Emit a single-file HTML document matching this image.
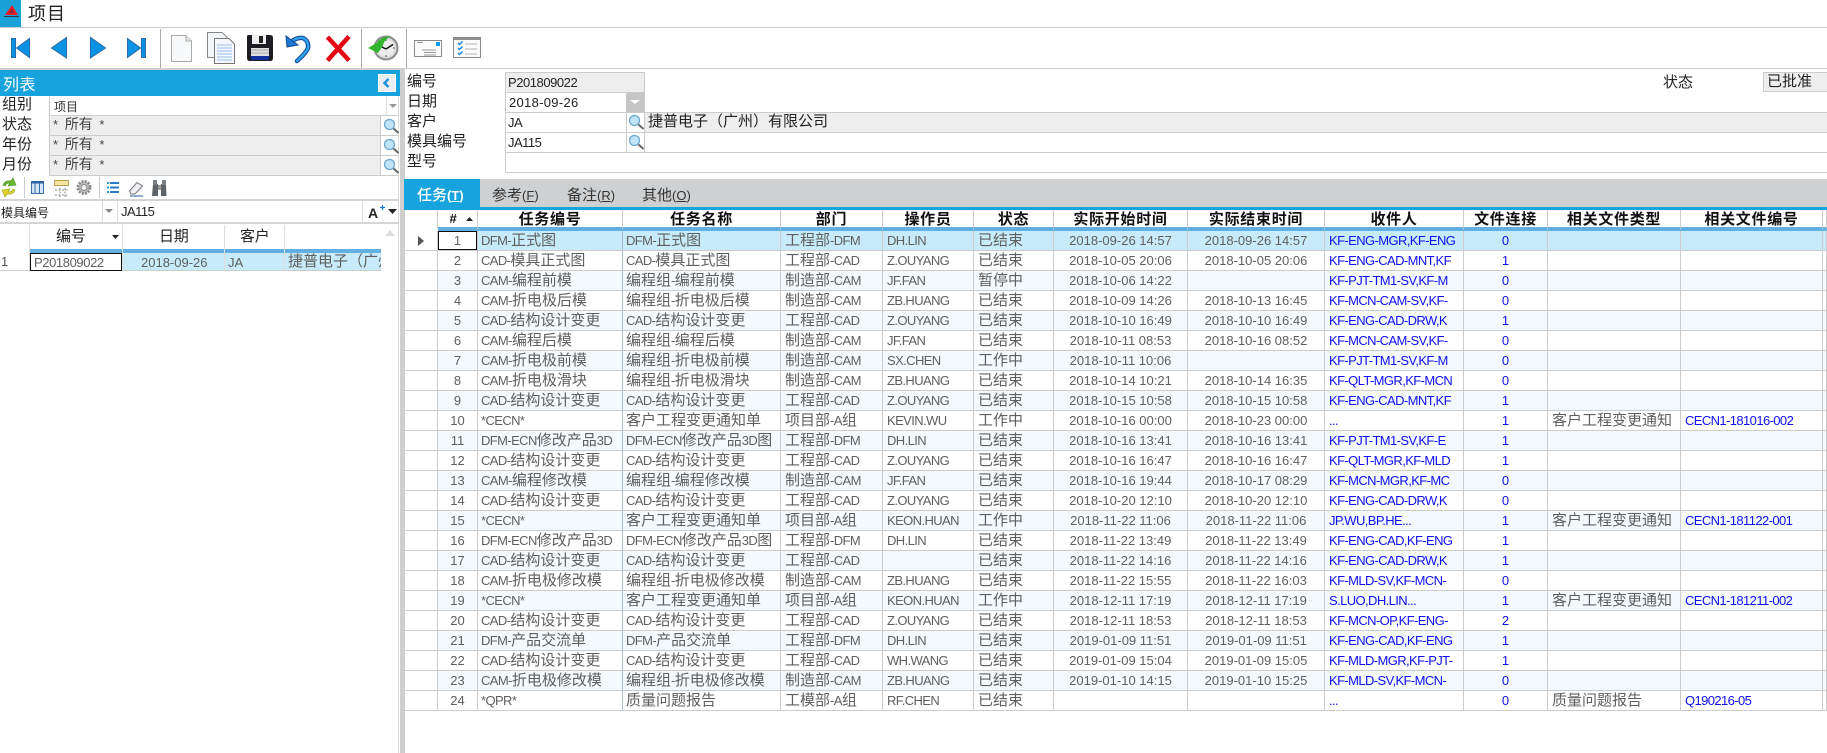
<!DOCTYPE html>
<html lang="zh"><head><meta charset="utf-8"><title>项目</title>
<style>
html,body{margin:0;padding:0;background:#fff}
body{width:1827px;height:753px;position:relative;overflow:hidden;font-family:"Liberation Sans","Noto Sans CJK SC",sans-serif;font-size:13px;color:#222}
.a{position:absolute;white-space:nowrap}
svg{position:absolute;overflow:visible}
i{font-style:normal;font-size:15px;font-family:"Noto Sans CJK SC",sans-serif;line-height:1;letter-spacing:0}
.l{background:#ccc;position:absolute}
.lb{position:absolute;font:15px/20px "Noto Sans CJK SC",sans-serif;color:#222;white-space:nowrap}
#g{position:absolute;left:405px;top:210px;width:1422px;table-layout:fixed;border-collapse:separate;border-spacing:0}
#g td,#g th{box-sizing:border-box;height:20px;padding:0 0 0 4px;border-right:1px solid #ccc;border-bottom:1px solid #ccc;overflow:hidden;white-space:nowrap;line-height:19px;color:#5f5f5f;font-weight:400;text-align:left;font-size:13px;letter-spacing:-.6px}
#g th{height:21px;border-bottom:4px solid #64afe2;font:700 15px/17px "Noto Sans CJK SC",sans-serif;letter-spacing:.7px;color:#111;text-align:center;padding:0}
#g td:nth-child(1){padding:0}
#g th:nth-child(1){border-bottom-color:#fff}
#g td:nth-child(2){text-align:center;padding:0;letter-spacing:0}
#g td:nth-child(3){border-right-color:#a9bbd2;padding-left:3px}
#g td:nth-child(4){padding-left:3px}
#g td:nth-child(8),#g td:nth-child(9){text-align:center;padding:0;letter-spacing:0}
#g td:nth-child(10),#g td:nth-child(13){color:#1010f0}
#g td:nth-child(11){color:#1010f0;text-align:center;padding:0;letter-spacing:0}
#g tr:nth-child(odd) td:nth-child(n+2){background:#f4f9fd}
#g tr.s td:nth-child(n+2){background:#c7ebf8}
#g tr.s td:nth-child(2){background:#fff;box-shadow:inset 0 0 0 1px #111}
</style></head><body>

<!-- title bar -->
<div class="a" style="left:0;top:0;width:21px;height:27px;background:#1aa1d8"></div>
<svg style="left:0;top:0" width="21" height="27"><path d="M12 5 L18 15 L5 15 Z" fill="#ec1c24"/><path d="M12 9 L14 13 L9 13 Z" fill="#7a2a3a"/><rect x="4" y="16" width="15" height="1" fill="#334"/></svg>
<div class="a" style="left:28px;top:0;font:18px/26px 'Noto Sans CJK SC',sans-serif;letter-spacing:1px;color:#222">项目</div>
<div class="l" style="left:0;top:27px;width:1827px;height:1px"></div>

<!-- toolbar -->
<div class="l" style="left:160px;top:29px;width:1px;height:39px;background:#aaa"></div>
<div class="l" style="left:361px;top:29px;width:1px;height:39px;background:#aaa"></div>
<div class="l" style="left:406px;top:29px;width:1px;height:39px;background:#aaa"></div>
<svg style="left:0;top:28px" width="500" height="40">
 <g fill="#0a93e2" stroke="#2a6aa8" stroke-width="1">
  <rect x="11.5" y="10.5" width="4" height="19"/><path d="M29.5 10.5V29.5L16.5 20Z"/>
  <path d="M66.5 9.5V30L51.5 20Z"/>
  <path d="M90.5 9.5V30L105.5 20Z"/>
  <rect x="141.5" y="10.5" width="4" height="19"/><path d="M127.5 10.5V29.5L140.5 20Z"/>
 </g>
 <!-- new -->
 <path d="M171.5 7.5H186L191.5 13V33.5H171.5Z" fill="#f8f9fb" stroke="#aaa"/><path d="M186 7.5V13H191.5" fill="#e4e4e4" stroke="#aaa"/>
 <!-- copy -->
 <path d="M207.5 4.5H222L227 9V29.5H207.5Z" fill="#f4f5f7" stroke="#888"/>
 <path d="M214.5 10.5H229L234.5 16V35.5H214.5Z" fill="#f4f7fc" stroke="#777"/>
 <path d="M217 17H232M217 20H232M217 23H232M217 26H232M217 29H232M217 32H232" stroke="#a9c8ee" stroke-width="1.2"/>
 <!-- save -->
 <path d="M248 7H270Q273 7 273 10V30Q273 33 270 33H250Q247 33 247 30V8Z" fill="#1c1c22"/>
 <rect x="252" y="7" width="14" height="9" fill="#eee"/><rect x="259" y="8" width="4" height="7" fill="#222"/>
 <rect x="251" y="20" width="18" height="8" fill="#e0e0e0"/><path d="M251 22H269M251 25H269" stroke="#aaa"/>
 <rect x="251" y="28" width="18" height="4" fill="#12309c"/>
 <!-- undo -->
 <path d="M291 14Q297 9 303 10Q309 13 308 20Q306 25 297 33" fill="none" stroke="#174a94" stroke-width="4.5" stroke-linecap="round"/>
 <path d="M291 14Q297 9 303 10Q309 13 308 20Q306 25 297 33" fill="none" stroke="#2fa0ee" stroke-width="2.4" stroke-linecap="round"/>
 <path d="M286 8L287 19L298 17Z" fill="#1b7ad4" stroke="#174a94"/>
 <!-- X -->
 <path d="M327.500 9L349 32.500M349 8.500L327.500 32.500" stroke="#e30613" stroke-width="4.600"/>
 <!-- clock -->
 <circle cx="386" cy="20" r="11.500" fill="#dcdcdc" stroke="#8e8e8e" stroke-width="2"/><circle cx="386" cy="20" r="8.500" fill="#ececec"/>
 <path d="M386 11V13M386 27V29M377 20H379M393 20H395" stroke="#555"/>
 <path d="M386 21L381 18.500M386 21L393 16.500" stroke="#111" stroke-width="1.500"/>
 <path d="M368 20L377 15Q380 9 391 8Q384 12 383 17L382 19L378 25Z" fill="#2fb52b"/>
 <!-- mail -->
 <rect x="414.500" y="12.500" width="27" height="16" fill="#fbfbfb" stroke="#8a8a8a"/><rect x="436" y="14" width="4" height="4" fill="#0c9be8"/>
 <path d="M417 14.500H423M422 22H436M424 24.500H436M424 27H436" stroke="#999"/>
 <!-- list -->
 <rect x="453.500" y="9.500" width="27" height="20" fill="#fbfbfb" stroke="#8a8a8a"/><rect x="454" y="10" width="26" height="2" fill="#8f8f8f"/>
 <path d="M458 15l1.500 1.500 3-3M458 20l1.500 1.500 3-3M458 25l1.500 1.500 3-3" fill="none" stroke="#1a86e0" stroke-width="1.500"/>
 <path d="M465 16H477M465 21H477M465 26H477" stroke="#b5b5b5"/>
</svg>
<div class="l" style="left:0;top:68px;width:1827px;height:1px"></div>
<div class="l" style="left:0;top:68px;width:404px;height:2px;background:#cfcfcf"></div>

<!-- splitter -->
<div class="l" style="left:400px;top:68px;width:5px;height:685px;background:#cfcfcf"></div>
<div class="l" style="left:398px;top:96px;width:1px;height:657px;background:#ddd"></div>

<!-- left header -->
<div class="a" style="left:0;top:70px;width:400px;height:26px;background:#17a3dd"></div>
<div class="a" style="left:3px;top:70px;font:16px/26px 'Noto Sans CJK SC',sans-serif;color:#fff;letter-spacing:.5px">列表</div>
<div class="a" style="left:378px;top:74px;width:16px;height:16px;background:#ebeef0;border:1px solid #fff"></div>
<svg style="left:378px;top:74px" width="18" height="18"><path d="M10.500 5L6.500 9L10.500 13" fill="none" stroke="#1a8fe0" stroke-width="2.500"/></svg>

<!-- left filters -->
<div class="lb" style="left:2px;top:94px">组别</div>
<div class="lb" style="left:2px;top:114px">状态</div>
<div class="lb" style="left:2px;top:134px">年份</div>
<div class="lb" style="left:2px;top:154px">月份</div>
<div class="a" style="left:50px;top:116px;width:330px;height:59px;background:#eee"></div>
<div class="l" style="left:49px;top:96px;width:1px;height:80px"></div>
<div class="l" style="left:386px;top:96px;width:1px;height:19px;background:#ddd"></div>
<div class="l" style="left:380px;top:116px;width:1px;height:60px"></div>
<div class="l" style="left:49px;top:115px;width:349px;height:1px"></div>
<div class="l" style="left:49px;top:135px;width:349px;height:1px"></div>
<div class="l" style="left:49px;top:155px;width:349px;height:1px"></div>
<div class="l" style="left:49px;top:175px;width:349px;height:1px"></div>
<div class="a" style="left:54px;top:98px;line-height:18px"><i style="font-size:12px;color:#333">项目</i></div>
<svg style="left:389px;top:103px" width="9" height="6"><path d="M0 1H8L4 5Z" fill="#999"/></svg>
<div class="a" style="left:53px;top:115px;line-height:20px;color:#444;word-spacing:3px"><span style="font-size:13px">*</span> <i style="font-size:14px">所有</i> <span style="font-size:13px">*</span></div>
<div class="a" style="left:53px;top:135px;line-height:20px;color:#444;word-spacing:3px"><span style="font-size:13px">*</span> <i style="font-size:14px">所有</i> <span style="font-size:13px">*</span></div>
<div class="a" style="left:53px;top:155px;line-height:20px;color:#444;word-spacing:3px"><span style="font-size:13px">*</span> <i style="font-size:14px">所有</i> <span style="font-size:13px">*</span></div>
<svg style="left:0;top:0" width="1827" height="260">
 <defs><g id="m"><circle cx="6.500" cy="6.500" r="5" fill="#bfe3f8" stroke="#6aa5cc" stroke-width="1.200"/><path d="M10.500 10.500L15.500 15" stroke="#666" stroke-width="2"/></g></defs>
 <use href="#m" x="383" y="118"/><use href="#m" x="383" y="138"/><use href="#m" x="383" y="158"/>
 <use href="#m" x="628" y="114"/><use href="#m" x="628" y="134"/>
</svg>

<!-- mini toolbar -->
<div class="l" style="left:24px;top:177px;width:1px;height:21px"></div>
<div class="l" style="left:99px;top:177px;width:1px;height:21px"></div>
<svg style="left:0;top:176px" width="180" height="24">
 <path d="M3 9Q5 4 11 5L13 2L16 9L8 10L10 7Q6 7 5 10Z" fill="#6cb82c" stroke="#3f8a1a" stroke-width=".6"/>
 <path d="M15 14Q13 19 7 18L5 21L2 14L10 13L8 16Q12 16 13 13Z" fill="#e4d22c" stroke="#8aa31a" stroke-width=".6"/>
 <rect x="31.500" y="5.500" width="12" height="12" fill="#d7e6f7" stroke="#3a6ea8"/><rect x="31" y="5" width="13" height="2.500" fill="#2a63a8"/><path d="M35 7V18M39.500 7V18" stroke="#3a6ea8"/>
 <rect x="54.500" y="4.500" width="14" height="5" fill="#f3e5a0" stroke="#b8a050"/><path d="M55 14H69M55 19H69" stroke="#888" stroke-dasharray="2 1.500"/><path d="M60 12V21M65 12V21" stroke="#888" stroke-dasharray="2 1.500"/>
 <circle cx="84" cy="11.500" r="6" fill="#c4c4c4" stroke="#8c8c8c" stroke-width="3" stroke-dasharray="2 1.200"/><circle cx="84" cy="11.500" r="3" fill="#eee" stroke="#888"/>
 <path d="M110 7H119M110 11.500H119M110 16H119" stroke="#2b79c9" stroke-width="2"/><path d="M107 7H109M107 11.500H109M107 16H109" stroke="#2a9ad8" stroke-width="2"/>
 <path d="M129.500 15L137 6.500L142.500 10L135 18H131Z" fill="#eef0f4" stroke="#777"/><path d="M130 20H143" stroke="#2b5a9c"/>
 <path d="M153 8H158V20H152ZM161 8H166L166.500 20H161Z" fill="#5f6468"/><rect x="153" y="4" width="4" height="5" fill="#7a7f84"/><rect x="162" y="4" width="4" height="5" fill="#7a7f84"/><rect x="158" y="9" width="3" height="5" fill="#999"/>
</svg>
<div class="l" style="left:0;top:199px;width:398px;height:2px;background:#d5d5d5"></div>

<!-- search row -->
<div class="a" style="left:1px;top:202px;line-height:21px"><i style="font-size:12px;color:#222">模具编号</i></div>
<div class="l" style="left:102px;top:201px;width:1px;height:21px;background:#ddd"></div>
<div class="l" style="left:117px;top:201px;width:1px;height:21px;background:#ddd"></div>
<svg style="left:105px;top:209px" width="9" height="6"><path d="M0 0H8L4 4Z" fill="#888"/></svg>
<div class="a" style="left:121px;top:201px;font-size:13px;line-height:21px;letter-spacing:-.5px;color:#222">JA115</div>
<div class="l" style="left:362px;top:201px;width:1px;height:21px;background:#ddd"></div>
<div class="a" style="left:368px;top:203px;font:700 14px/20px 'Liberation Sans',sans-serif;color:#222">A</div>
<svg style="left:376px;top:203px" width="24" height="14"><path d="M4 4.500H9M6.500 2V7" stroke="#1a7ae0" stroke-width="1.200"/><path d="M12 6H21L16.500 11Z" fill="#222"/></svg>
<div class="l" style="left:0;top:222px;width:398px;height:2px;background:#d5d5d5"></div>

<!-- left grid -->
<div class="a" style="left:56px;top:225px;font:15px/22px 'Noto Sans CJK SC',sans-serif;letter-spacing:-.3px">编号</div>
<div class="a" style="left:159px;top:225px;font:15px/22px 'Noto Sans CJK SC',sans-serif;letter-spacing:-.3px">日期</div>
<div class="a" style="left:240px;top:225px;font:15px/22px 'Noto Sans CJK SC',sans-serif;letter-spacing:-.3px">客户</div>
<svg style="left:112px;top:235px" width="8" height="5"><path d="M0 0H7L3.500 4Z" fill="#222"/></svg>
<div class="a" style="left:30px;top:249px;width:351px;height:4px;background:#64afe2"></div>
<div class="a" style="left:30px;top:253px;width:351px;height:17px;background:#c7ebf8"></div>
<div class="l" style="left:29px;top:225px;width:1px;height:45px;background:#ddd"></div>
<div class="l" style="left:122px;top:225px;width:1px;height:45px;background:#ddd"></div>
<div class="l" style="left:224px;top:225px;width:1px;height:45px;background:#ddd"></div>
<div class="l" style="left:284px;top:225px;width:1px;height:45px;background:#ddd"></div>
<div class="l" style="left:0;top:270px;width:381px;height:1px"></div>
<div class="a" style="left:30px;top:253px;width:92px;height:18px;box-sizing:border-box;border:1px solid #111;background:#fff;line-height:18px;padding-left:3px;font-size:13px;letter-spacing:-.4px;color:#5f5f5f">P201809022</div>
<div class="a" style="left:1px;top:253px;line-height:17px;color:#555">1</div>
<div class="a" style="left:141px;top:254px;font-size:13px;line-height:18px;color:#5f5f5f">2018-09-26</div>
<div class="a" style="left:228px;top:254px;line-height:18px;color:#5f5f5f">JA</div>
<div class="a" style="left:288px;top:252px;width:93px;overflow:hidden;line-height:20px;color:#5f5f5f"><i>捷普电子（广州</i></div>
<svg style="left:385px;top:229px" width="12" height="8"><path d="M0 7H10L5 1Z" fill="#ddd"/></svg>

<!-- right form -->
<div class="lb" style="left:407px;top:71px">编号</div>
<div class="lb" style="left:407px;top:91px">日期</div>
<div class="lb" style="left:407px;top:111px">客户</div>
<div class="lb" style="left:407px;top:131px">模具编号</div>
<div class="lb" style="left:407px;top:151px">型号</div>
<div class="a" style="left:505px;top:72px;width:140px;height:20px;background:#eee"></div>
<div class="a" style="left:645px;top:112px;width:1182px;height:20px;background:#eee"></div>
<div class="a" style="left:626px;top:92px;width:19px;height:20px;background:#c6c6c6"></div>
<svg style="left:630px;top:99px" width="11" height="7"><path d="M0 1H10L5 5Z" fill="#fff"/></svg>
<div class="l" style="left:505px;top:72px;width:140px;height:1px"></div>
<div class="l" style="left:505px;top:92px;width:140px;height:1px"></div>
<div class="l" style="left:505px;top:112px;width:1322px;height:1px"></div>
<div class="l" style="left:505px;top:132px;width:1322px;height:1px"></div>
<div class="l" style="left:505px;top:152px;width:1322px;height:1px"></div>
<div class="l" style="left:505px;top:172px;width:1322px;height:1px"></div>
<div class="l" style="left:505px;top:72px;width:1px;height:100px"></div>
<div class="l" style="left:644px;top:72px;width:1px;height:80px"></div>
<div class="l" style="left:626px;top:112px;width:1px;height:40px"></div>
<div class="a" style="left:508px;top:73px;line-height:19px;letter-spacing:-.45px;color:#222">P201809022</div>
<div class="a" style="left:509px;top:93px;line-height:19px;letter-spacing:.3px;color:#222">2018-09-26</div>
<div class="a" style="left:508px;top:113px;line-height:19px;letter-spacing:-.5px;color:#222">JA</div>
<div class="a" style="left:508px;top:133px;line-height:19px;letter-spacing:-.5px;color:#222">JA115</div>
<div class="a" style="left:648px;top:112px;line-height:20px;color:#222"><i>捷普电子（广州）有限公司</i></div>
<div class="lb" style="left:1663px;top:72px">状态</div>
<div class="a" style="left:1763px;top:72px;width:64px;height:20px;box-sizing:border-box;background:#eee;border:1px solid #ccc;border-right:0"></div>
<div class="lb" style="left:1767px;top:71px;color:#222">已批准</div>

<!-- tabs -->
<div class="a" style="left:404px;top:179px;width:1423px;height:28px;background:#cfd0d2"></div>
<div class="a" style="left:404px;top:179px;width:76px;height:28px;background:#17a3dd"></div>
<div class="a" style="left:404px;top:207px;width:1423px;height:3px;background:#17a3dd"></div>
<div class="a" style="left:417px;top:186px;line-height:20px;color:#fff;font-size:13px"><i style="font-weight:500">任务</i><b style="font-weight:700">(<u>T</u>)</b></div>
<div class="a" style="left:492px;top:186px;line-height:20px;color:#333;font-size:13px"><i>参考</i>(<u>F</u>)</div>
<div class="a" style="left:567px;top:186px;line-height:20px;color:#333;font-size:13px"><i>备注</i>(<u>R</u>)</div>
<div class="a" style="left:642px;top:186px;line-height:20px;color:#333;font-size:13px"><i>其他</i>(<u>O</u>)</div>

<!-- task grid -->
<table id="g">
<colgroup><col style="width:33px"><col style="width:40px"><col style="width:145px"><col style="width:158px"><col style="width:102px"><col style="width:91px"><col style="width:80px"><col style="width:134px"><col style="width:137px"><col style="width:139px"><col style="width:84px"><col style="width:133px"><col style="width:142px"><col style="width:4px"></colgroup>
<thead><tr><th></th><th style="font-family:'Liberation Sans',sans-serif;font-size:13px;padding-right:8px">#</th><th>任务编号</th><th>任务名称</th><th>部门</th><th>操作员</th><th>状态</th><th>实际开始时间</th><th>实际结束时间</th><th>收件人</th><th>文件连接</th><th>相关文件类型</th><th>相关文件编号</th><th></th></tr></thead>
<tbody>
<tr class="s"><td></td><td>1</td><td>DFM-<i>正式图</i></td><td>DFM-<i>正式图</i></td><td><i>工程部</i>-DFM</td><td>DH.LIN</td><td><i>已结束</i></td><td>2018-09-26 14:57</td><td>2018-09-26 14:57</td><td>KF-ENG-MGR,KF-ENG</td><td>0</td><td></td><td></td><td></td></tr>
<tr><td></td><td>2</td><td>CAD-<i>模具正式图</i></td><td>CAD-<i>模具正式图</i></td><td><i>工程部</i>-CAD</td><td>Z.OUYANG</td><td><i>已结束</i></td><td>2018-10-05 20:06</td><td>2018-10-05 20:06</td><td>KF-ENG-CAD-MNT,KF</td><td>1</td><td></td><td></td><td></td></tr>
<tr><td></td><td>3</td><td>CAM-<i>编程前模</i></td><td><i>编程组</i>-<i>编程前模</i></td><td><i>制造部</i>-CAM</td><td>JF.FAN</td><td><i>暂停中</i></td><td>2018-10-06 14:22</td><td></td><td>KF-PJT-TM1-SV,KF-M</td><td>0</td><td></td><td></td><td></td></tr>
<tr><td></td><td>4</td><td>CAM-<i>折电极后模</i></td><td><i>编程组</i>-<i>折电极后模</i></td><td><i>制造部</i>-CAM</td><td>ZB.HUANG</td><td><i>已结束</i></td><td>2018-10-09 14:26</td><td>2018-10-13 16:45</td><td>KF-MCN-CAM-SV,KF-</td><td>0</td><td></td><td></td><td></td></tr>
<tr><td></td><td>5</td><td>CAD-<i>结构设计变更</i></td><td>CAD-<i>结构设计变更</i></td><td><i>工程部</i>-CAD</td><td>Z.OUYANG</td><td><i>已结束</i></td><td>2018-10-10 16:49</td><td>2018-10-10 16:49</td><td>KF-ENG-CAD-DRW,K</td><td>1</td><td></td><td></td><td></td></tr>
<tr><td></td><td>6</td><td>CAM-<i>编程后模</i></td><td><i>编程组</i>-<i>编程后模</i></td><td><i>制造部</i>-CAM</td><td>JF.FAN</td><td><i>已结束</i></td><td>2018-10-11 08:53</td><td>2018-10-16 08:52</td><td>KF-MCN-CAM-SV,KF-</td><td>0</td><td></td><td></td><td></td></tr>
<tr><td></td><td>7</td><td>CAM-<i>折电极前模</i></td><td><i>编程组</i>-<i>折电极前模</i></td><td><i>制造部</i>-CAM</td><td>SX.CHEN</td><td><i>工作中</i></td><td>2018-10-11 10:06</td><td></td><td>KF-PJT-TM1-SV,KF-M</td><td>0</td><td></td><td></td><td></td></tr>
<tr><td></td><td>8</td><td>CAM-<i>折电极滑块</i></td><td><i>编程组</i>-<i>折电极滑块</i></td><td><i>制造部</i>-CAM</td><td>ZB.HUANG</td><td><i>已结束</i></td><td>2018-10-14 10:21</td><td>2018-10-14 16:35</td><td>KF-QLT-MGR,KF-MCN</td><td>0</td><td></td><td></td><td></td></tr>
<tr><td></td><td>9</td><td>CAD-<i>结构设计变更</i></td><td>CAD-<i>结构设计变更</i></td><td><i>工程部</i>-CAD</td><td>Z.OUYANG</td><td><i>已结束</i></td><td>2018-10-15 10:58</td><td>2018-10-15 10:58</td><td>KF-ENG-CAD-MNT,KF</td><td>1</td><td></td><td></td><td></td></tr>
<tr><td></td><td>10</td><td>*CECN*</td><td><i>客户工程变更通知单</i></td><td><i>项目部</i>-A<i>组</i></td><td>KEVIN.WU</td><td><i>工作中</i></td><td>2018-10-16 00:00</td><td>2018-10-23 00:00</td><td>...</td><td>1</td><td><i>客户工程变更通知</i></td><td>CECN1-181016-002</td><td></td></tr>
<tr><td></td><td>11</td><td>DFM-ECN<i>修改产品</i>3D</td><td>DFM-ECN<i>修改产品</i>3D<i>图</i></td><td><i>工程部</i>-DFM</td><td>DH.LIN</td><td><i>已结束</i></td><td>2018-10-16 13:41</td><td>2018-10-16 13:41</td><td>KF-PJT-TM1-SV,KF-E</td><td>1</td><td></td><td></td><td></td></tr>
<tr><td></td><td>12</td><td>CAD-<i>结构设计变更</i></td><td>CAD-<i>结构设计变更</i></td><td><i>工程部</i>-CAD</td><td>Z.OUYANG</td><td><i>已结束</i></td><td>2018-10-16 16:47</td><td>2018-10-16 16:47</td><td>KF-QLT-MGR,KF-MLD</td><td>1</td><td></td><td></td><td></td></tr>
<tr><td></td><td>13</td><td>CAM-<i>编程修改模</i></td><td><i>编程组</i>-<i>编程修改模</i></td><td><i>制造部</i>-CAM</td><td>JF.FAN</td><td><i>已结束</i></td><td>2018-10-16 19:44</td><td>2018-10-17 08:29</td><td>KF-MCN-MGR,KF-MC</td><td>0</td><td></td><td></td><td></td></tr>
<tr><td></td><td>14</td><td>CAD-<i>结构设计变更</i></td><td>CAD-<i>结构设计变更</i></td><td><i>工程部</i>-CAD</td><td>Z.OUYANG</td><td><i>已结束</i></td><td>2018-10-20 12:10</td><td>2018-10-20 12:10</td><td>KF-ENG-CAD-DRW,K</td><td>0</td><td></td><td></td><td></td></tr>
<tr><td></td><td>15</td><td>*CECN*</td><td><i>客户工程变更通知单</i></td><td><i>项目部</i>-A<i>组</i></td><td>KEON.HUAN</td><td><i>工作中</i></td><td>2018-11-22 11:06</td><td>2018-11-22 11:06</td><td>JP.WU,BP.HE...</td><td>1</td><td><i>客户工程变更通知</i></td><td>CECN1-181122-001</td><td></td></tr>
<tr><td></td><td>16</td><td>DFM-ECN<i>修改产品</i>3D</td><td>DFM-ECN<i>修改产品</i>3D<i>图</i></td><td><i>工程部</i>-DFM</td><td>DH.LIN</td><td><i>已结束</i></td><td>2018-11-22 13:49</td><td>2018-11-22 13:49</td><td>KF-ENG-CAD,KF-ENG</td><td>1</td><td></td><td></td><td></td></tr>
<tr><td></td><td>17</td><td>CAD-<i>结构设计变更</i></td><td>CAD-<i>结构设计变更</i></td><td><i>工程部</i>-CAD</td><td></td><td><i>已结束</i></td><td>2018-11-22 14:16</td><td>2018-11-22 14:16</td><td>KF-ENG-CAD-DRW,K</td><td>1</td><td></td><td></td><td></td></tr>
<tr><td></td><td>18</td><td>CAM-<i>折电极修改模</i></td><td><i>编程组</i>-<i>折电极修改模</i></td><td><i>制造部</i>-CAM</td><td>ZB.HUANG</td><td><i>已结束</i></td><td>2018-11-22 15:55</td><td>2018-11-22 16:03</td><td>KF-MLD-SV,KF-MCN-</td><td>0</td><td></td><td></td><td></td></tr>
<tr><td></td><td>19</td><td>*CECN*</td><td><i>客户工程变更通知单</i></td><td><i>项目部</i>-A<i>组</i></td><td>KEON.HUAN</td><td><i>工作中</i></td><td>2018-12-11 17:19</td><td>2018-12-11 17:19</td><td>S.LUO,DH.LIN...</td><td>1</td><td><i>客户工程变更通知</i></td><td>CECN1-181211-002</td><td></td></tr>
<tr><td></td><td>20</td><td>CAD-<i>结构设计变更</i></td><td>CAD-<i>结构设计变更</i></td><td><i>工程部</i>-CAD</td><td>Z.OUYANG</td><td><i>已结束</i></td><td>2018-12-11 18:53</td><td>2018-12-11 18:53</td><td>KF-MCN-OP,KF-ENG-</td><td>2</td><td></td><td></td><td></td></tr>
<tr><td></td><td>21</td><td>DFM-<i>产品交流单</i></td><td>DFM-<i>产品交流单</i></td><td><i>工程部</i>-DFM</td><td>DH.LIN</td><td><i>已结束</i></td><td>2019-01-09 11:51</td><td>2019-01-09 11:51</td><td>KF-ENG-CAD,KF-ENG</td><td>1</td><td></td><td></td><td></td></tr>
<tr><td></td><td>22</td><td>CAD-<i>结构设计变更</i></td><td>CAD-<i>结构设计变更</i></td><td><i>工程部</i>-CAD</td><td>WH.WANG</td><td><i>已结束</i></td><td>2019-01-09 15:04</td><td>2019-01-09 15:05</td><td>KF-MLD-MGR,KF-PJT-</td><td>1</td><td></td><td></td><td></td></tr>
<tr><td></td><td>23</td><td>CAM-<i>折电极修改模</i></td><td><i>编程组</i>-<i>折电极修改模</i></td><td><i>制造部</i>-CAM</td><td>ZB.HUANG</td><td><i>已结束</i></td><td>2019-01-10 14:15</td><td>2019-01-10 15:25</td><td>KF-MLD-SV,KF-MCN-</td><td>0</td><td></td><td></td><td></td></tr>
<tr><td></td><td>24</td><td>*QPR*</td><td><i>质量问题报告</i></td><td><i>工模部</i>-A<i>组</i></td><td>RF.CHEN</td><td><i>已结束</i></td><td></td><td></td><td>...</td><td>0</td><td><i>质量问题报告</i></td><td>Q190216-05</td><td></td></tr>
</tbody></table>
<svg style="left:465px;top:216px" width="10" height="6"><path d="M1 5H8L4.500 1Z" fill="#222"/></svg>
<svg style="left:417px;top:235px" width="8" height="12"><path d="M1 1V11L7 6Z" fill="#555"/></svg>
</body></html>
